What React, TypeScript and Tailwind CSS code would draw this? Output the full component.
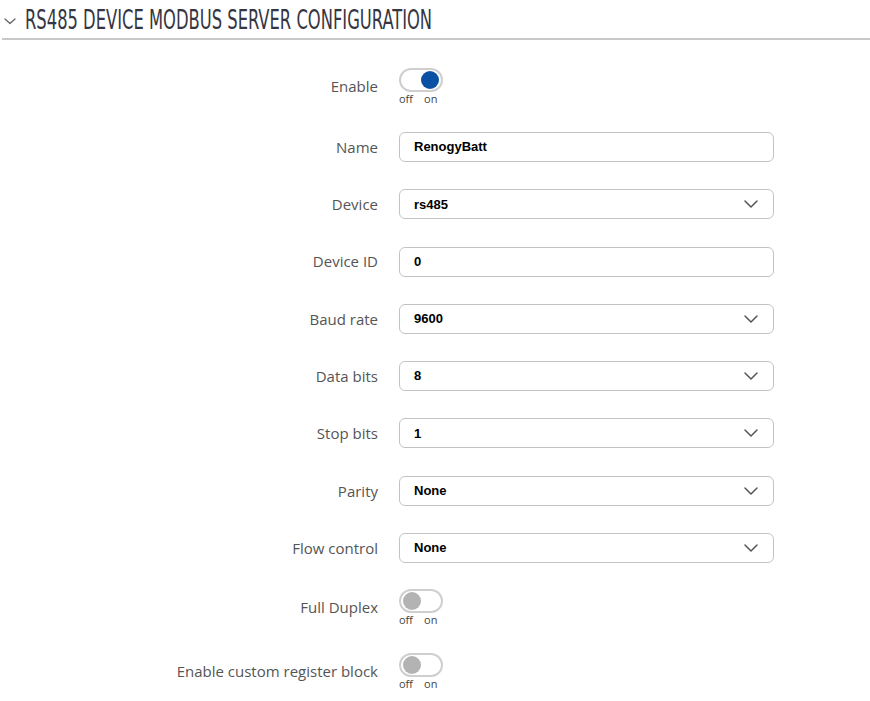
import React from "react";

const Chevron = () => (
  <svg width="16" height="10" viewBox="0 0 16 10" className="absolute right-[14px] top-1/2 -translate-y-1/2">
    <path d="M2 2 L8 8 L14 2" fill="none" stroke="#555" strokeWidth="1.5" strokeLinecap="round" strokeLinejoin="round" />
  </svg>
);

const Label = ({ children }: { children: React.ReactNode }) => (
  <div className="w-[379px] shrink-0 pr-[1px] text-right text-[15px] text-[#555]" style={{ fontFamily: '"Open Sans", "Noto Sans", sans-serif' }}>
    {children}
  </div>
);

const Field = ({ label, value, select }: { label: string; value: string; select?: boolean }) => (
  <div className="flex items-center gap-[20px]">
    <Label>{label}</Label>
    <div className="relative flex h-[30px] w-[375px] items-center rounded-[6px] border border-[#c3c3c3] bg-white pl-[14px] text-[13px] font-bold text-black" style={{ fontFamily: '"Liberation Sans", Arial, sans-serif' }}>
      {value}
      {select && <Chevron />}
    </div>
  </div>
);

const Toggle = ({ label, on }: { label: string; on?: boolean }) => (
  <div className="flex items-center gap-[20px]">
    <Label>{label}</Label>
    <div className="flex flex-col">
      <div className={`flex h-[24px] w-[44px] items-center rounded-full border-2 border-[#cfcfcf] bg-white px-[2px] ${on ? "justify-end" : "justify-start"}`}>
        <div className={`h-[18px] w-[18px] rounded-full ${on ? "bg-[#0a50a4]" : "bg-[#b3b3b3]"}`} />
      </div>
      <div className="mt-[1px] flex gap-[11px] text-[11px] leading-[12px] text-[#444]" style={{ fontFamily: '"Open Sans", "Noto Sans", sans-serif' }}>
        <span>off</span>
        <span>on</span>
      </div>
    </div>
  </div>
);

export default function App() {
  return (
    <div className="h-[701px] w-[870px] overflow-hidden bg-white">
      <div className="flex h-[40px] items-center border-b-2 border-[#c8c8c8] ml-[2px]">
        <svg width="14" height="10" viewBox="0 0 14 10" className="ml-[1px] mt-[4px]">
          <path d="M2 3 L7 7.5 L12 3" fill="none" stroke="#666" strokeWidth="1.3" strokeLinecap="round" strokeLinejoin="round" />
        </svg>
        <div className="ml-[8px] origin-left scale-x-[0.673] whitespace-nowrap text-[27px] leading-none text-[#363642]" style={{ fontFamily: '"DejaVu Sans", sans-serif', fontStretch: "condensed" }}>
          RS485 DEVICE MODBUS SERVER CONFIGURATION
        </div>
      </div>
      <div className="mt-[28px] flex flex-col">
        <Toggle label="Enable" on />
        <div className="mt-[27px] flex flex-col gap-[27.3px]">
          <Field label="Name" value="RenogyBatt" />
          <Field label="Device" value="rs485" select />
          <Field label="Device ID" value="0" />
          <Field label="Baud rate" value="9600" select />
          <Field label="Data bits" value="8" select />
          <Field label="Stop bits" value="1" select />
          <Field label="Parity" value="None" select />
          <Field label="Flow control" value="None" select />
        </div>
        <div className="mt-[26px] flex flex-col gap-[27px]">
          <Toggle label="Full Duplex" />
          <Toggle label="Enable custom register block" />
        </div>
      </div>
    </div>
  );
}
